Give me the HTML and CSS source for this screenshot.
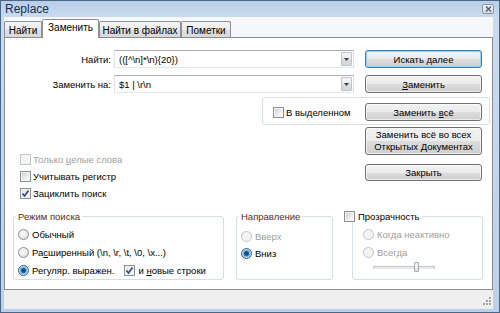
FILE: index.html
```html
<!DOCTYPE html>
<html>
<head>
<meta charset="utf-8">
<title>Replace</title>
<link rel="stylesheet" href="styles.css">
</head>
<body>
<div class="window">
  <div class="titlebar">
    <span class="title">Replace</span>
    <span class="close"><svg width="7" height="6" viewBox="0 0 7 6"><path d="M1 0.5 L6 5.5 M6 0.5 L1 5.5" stroke="#505a66" stroke-width="1.3"/></svg></span>
  </div>
  <div class="tabs">
    <div class="tab t1">Найти</div>
    <div class="tab active t2">Заменить</div>
    <div class="tab t3">Найти в файлах</div>
    <div class="tab t4">Пометки</div>
  </div>
  <div class="panel">
    <div class="row">
      <span class="lbl">Найти:</span>
      <div class="combo"><span class="val">(([^\n]*\n){20})</span><span class="arrow"><svg width="5" height="3" viewBox="0 0 5 3"><path d="M0 0 H5 L2.5 3 Z" fill="#404040"/></svg></span></div>
      <div class="btn default"><span>Искать далее</span></div>
    </div>
    <div class="row r2">
      <span class="lbl">Заменить на:</span>
      <div class="combo"><span class="val">$1 | \r\n</span><span class="arrow"><svg width="5" height="3" viewBox="0 0 5 3"><path d="M0 0 H5 L2.5 3 Z" fill="#404040"/></svg></span></div>
      <div class="btn"><span><u>З</u>аменить</span></div>
    </div>
    <div class="selbox">
      <div class="opt"><span class="cb"></span><span>В выделенном</span></div>
      <div class="btn"><span>Заменить <u>в</u>сё</span></div>
    </div>
    <div class="lower">
      <div class="opts">
        <div class="opt disabled"><span class="cb"></span><span>Только <u>ц</u>елые слова</span></div>
        <div class="opt"><span class="cb"></span><span>Учитывать регистр</span></div>
        <div class="opt"><span class="cb checked"><svg width="9" height="9" viewBox="0 0 9 9"><path d="M1.5 4.5 L3.5 7 L7.5 1.5" fill="none" stroke="#2d4687" stroke-width="1.6"/></svg></span><span>Зациклить поиск</span></div>
      </div>
      <div class="btncol">
        <div class="btn tall"><span>Заменить всё во всех<br>Открытых Документах</span></div>
        <div class="btn closebtn"><span>Закрыть</span></div>
      </div>
    </div>
    <div class="groups">
      <fieldset class="grp g1">
        <legend>Режим поиска</legend>
        <div class="opt"><span class="rb"></span><span>Обычный</span></div>
        <div class="opt"><span class="rb"></span><span>Ра<u>с</u>ширенный (\n, \r, \t, \0, \x...)</span></div>
        <div class="opt"><span class="rb checked"></span><span>Регуляр. выражен.</span><span class="cb checked nl"><svg width="9" height="9" viewBox="0 0 9 9"><path d="M1.5 4.5 L3.5 7 L7.5 1.5" fill="none" stroke="#2d4687" stroke-width="1.6"/></svg></span><span>и <u>н</u>овые строки</span></div>
      </fieldset>
      <fieldset class="grp g2">
        <legend>Направление</legend>
        <div class="opt disabled"><span class="rb"></span><span>Вверх</span></div>
        <div class="opt"><span class="rb checked"></span><span>Вниз</span></div>
      </fieldset>
      <fieldset class="grp g3">
        <legend><span class="cb"></span><span>Прозрачность</span></legend>
        <div class="opt disabled"><span class="rb"></span><span>Когда неактивно</span></div>
        <div class="opt disabled"><span class="rb"></span><span>Всегда</span></div>
        <div class="slider"><span class="track"></span><span class="thumb"></span></div>
      </fieldset>
    </div>
  </div>
  <div class="status">
    <svg class="grip" width="11" height="11" viewBox="0 0 11 11">
      <g fill="#ffffff"><rect x="9" y="1" width="2" height="2"/><rect x="6" y="4" width="2" height="2"/><rect x="9" y="4" width="2" height="2"/><rect x="3" y="7" width="2" height="2"/><rect x="6" y="7" width="2" height="2"/><rect x="9" y="7" width="2" height="2"/></g>
      <g fill="#9aa2ab"><rect x="8" y="0" width="2" height="2"/><rect x="5" y="3" width="2" height="2"/><rect x="8" y="3" width="2" height="2"/><rect x="2" y="6" width="2" height="2"/><rect x="5" y="6" width="2" height="2"/><rect x="8" y="6" width="2" height="2"/></g>
    </svg>
  </div>
</div>
</body>
</html>
```

FILE: styles.css
```css
* { box-sizing: border-box; }
html, body { margin: 0; padding: 0; }
body {
  width: 500px; height: 313px; overflow: hidden; background: #fff;
  font-family: "Liberation Sans", Arial, sans-serif; font-size: 9.5px; color: #000;
}
u { text-decoration: underline; text-underline-offset: 1px; }

.window {
  width: 500px; height: 313px;
  border: 1px solid #4b6787;
  background: linear-gradient(to bottom, #b8cfe8 0, #cadbee 17px, #bcd1e9 100%);
  padding: 0 6px 3px 3px;
  display: flex; flex-direction: column;
}

.titlebar {
  height: 16px; display: flex; align-items: center; justify-content: space-between;
}
.title { color: #172f52; font-size: 12px; margin-left: 1px; }
.close {
  width: 12px; height: 10px; margin-right: -1px;
  border: 1px solid #8996a6; border-radius: 2px;
  background: linear-gradient(#f3f5f8, #d3dae3);
  display: flex; align-items: center; justify-content: center;
}

.tabs {
  height: 20px; display: flex; align-items: flex-end;
  background: linear-gradient(#f7f9fc, #f2f5f9);
}
.tab {
  height: 16px; border: 1px solid #8c9097; border-bottom: none;
  border-radius: 2px 2px 0 0; flex: none;
  background: linear-gradient(#f5f5f5, #ebebeb 50%, #dedede 51%, #d9d9d9);
  display: flex; align-items: center; justify-content: center;
  padding-top: 1px; white-space: nowrap; font-size: 10px;
}
.t1 { width: 38px; }
.t2 { width: 57px; }
.t3 { width: 82px; }
.t4 { width: 50px; }
.tab.active {
  height: 19px; background: #fff; margin-bottom: -1px;
  position: relative; z-index: 1; padding-top: 0; padding-bottom: 3px;
}

.panel {
  height: 253px; background: #fff; border: 1px solid #898c95;
  padding: 12px 10px 0 0;
}

.row { display: flex; align-items: center; height: 18px; }
.r2 { margin-top: 7px; }
.lbl { width: 109px; padding-right: 3px; text-align: right; flex: none; }
.combo {
  width: 240px; height: 18px; flex: none;
  border: 1px solid #abadb3; border-color: #abadb3 #dbdfe6 #e3e9ef #e2e3ea;
  display: flex; align-items: center; padding-left: 4px;
}
.combo .val { flex: 1; }
.arrow {
  width: 11px; height: 14px; margin-right: 1px;
  border: 1px solid #bfc3ca; border-radius: 1px;
  background: linear-gradient(#f6f6f6, #e6e8eb 50%, #d9dce1 51%, #d4d7dc);
  display: flex; align-items: center; justify-content: center;
}

.btn {
  width: 117px; height: 18px; margin-left: auto; flex: none;
  border: 1px solid #707070; border-radius: 3px;
  background: linear-gradient(#f2f2f2, #ebebeb 50%, #dddddd 51%, #cfcfcf);
  box-shadow: inset 0 0 0 1px rgba(255,255,255,0.6);
  display: flex; align-items: center; justify-content: center; text-align: center;
  white-space: nowrap;
}
.btn.default {
  border-color: #3c7fb1;
  box-shadow: inset 0 0 0 1px #8fd4f5;
}

.selbox {
  width: 228px; height: 28px; margin: 4px -8px 0 auto;
  border: 1px solid #d5dfe5; border-radius: 3px;
  display: flex; align-items: flex-start; padding: 5px 7px 0 10px;
}
.selbox .opt { height: 18px; }

.opt { height: 17px; display: flex; align-items: center; white-space: nowrap; }
.opt.disabled { color: #a0a0a0; }

.cb {
  width: 11px; height: 11px; flex: none; margin-right: 2px;
  border: 1px solid #8e8f8f;
  background: linear-gradient(135deg, #c6cad0, #eef0f2 60%, #fafafa);
  box-shadow: inset 0 0 0 1px #f4f4f4;
  display: inline-flex; align-items: center; justify-content: center;
}
.cb.checked { background: linear-gradient(135deg, #dfe3e8, #fafafa); }
.disabled .cb { border-color: #c5c5c5; background: #f4f4f4; box-shadow: none; }
.cb.nl { margin-left: 10px; margin-right: 3px; }

.rb {
  width: 11px; height: 11px; flex: none; margin-right: 3px; border-radius: 50%;
  border: 1px solid #8e8f8f;
  background: radial-gradient(circle at 40% 35%, #ffffff, #d3d6da);
}
.rb.checked {
  border-color: #2d5b85;
  background: radial-gradient(circle, #173f6b 0, #1f5a93 2px, #66b2e0 3px, #b9dbf1 4px, #eef3f7 5px);
}
.disabled .rb { border-color: #c4c4c4; background: #f4f4f4; }

.lower { display: flex; margin-top: 2px; }
.opts { flex: 1; padding: 24px 0 0 15px; }
.btncol { width: 117px; display: flex; flex-direction: column; }
.btn.tall { height: 28px; line-height: 12px; }
.btn.closebtn { height: 17px; margin-top: 9px; }

.groups { display: flex; margin-top: 8px; padding-left: 8px; }
.grp {
  margin: 0; min-width: 0; flex: none;
  border: 1px solid #d5dfe5; border-radius: 3px;
  padding: 2px 4px 0 4px;
}
.grp legend {
  padding: 0 2px; margin-left: -2px; height: 13px; line-height: 13px;
  color: #5c2b22;
}
.grp .opt { height: 18px; }
.g1 { width: 211px; }
.g2 { width: 97px; margin-left: 12px; padding-top: 5px; }
.g2 .opt { height: 17px; }
.g3 { width: 131px; margin-left: 19px; padding-left: 10px; }
.g3 legend {
  color: #000; margin-left: -19px; padding: 0 2px 0 0;
  display: flex; align-items: center;
}
.g3 legend .cb { margin-right: 3px; }

.slider { position: relative; width: 62px; height: 10px; margin-left: 10px; margin-top: 1px; }
.track {
  position: absolute; left: 0; right: 0; top: 4px; height: 3px;
  border: 1px solid #c3c6ca; border-bottom-color: #e4e6e8; background: #e9ebee;
}
.thumb {
  position: absolute; left: 41px; top: 0; width: 5px; height: 10px;
  border: 1px solid #a7abb0; border-radius: 1px;
  background: linear-gradient(#f7f7f7, #e2e4e6);
}

.status {
  height: 19px; background: #efefef;
  display: flex; justify-content: flex-end; align-items: flex-end;
  padding: 0 1px 1px 0;
}
```
